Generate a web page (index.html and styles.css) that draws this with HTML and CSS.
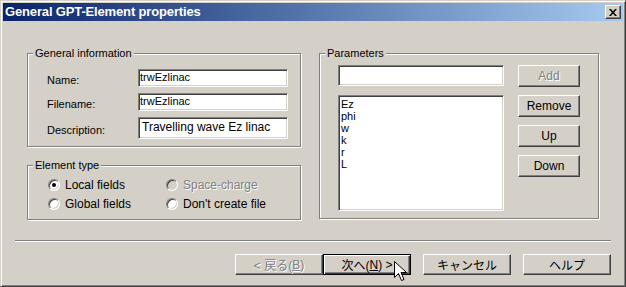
FILE: index.html
```html
<html>
<head>
    <meta http-equiv="content-type" content="text/html;charset=utf-8"/>
    <title>General GPT-Element properties</title>
    <link rel="stylesheet" href="styles.css">
</head>
<body>

<div class="window">
    <div class="titlebar">
        <span class="title">General GPT-Element properties</span>
        <span class="close">
            <svg width="8" height="7" viewBox="0 0 8 7"><path d="M0 0h2l2 2.5 2-2.5h2l-3 3.5 3 3.5h-2l-2-2.5-2 2.5h-2l3-3.5z" fill="#000"/></svg>
        </span>
    </div>

    <div class="main">
        <div class="leftCol">
            <div class="group info">
                <div class="legend">General information</div>
                <div class="fields">
                    <span class="lbl">Name:</span><div class="edit">trwEzlinac</div>
                    <span class="lbl">Filename:</span><div class="edit">trwEzlinac</div>
                    <span class="lbl">Description:</span><div class="edit big">Travelling wave Ez linac</div>
                </div>
            </div>
            <div class="group type">
                <div class="legend">Element type</div>
                <div class="radios">
                    <div class="radio"><span class="dot on"></span>Local fields</div>
                    <div class="radio off"><span class="dot"></span>Space-charge</div>
                    <div class="radio"><span class="dot"></span>Global fields</div>
                    <div class="radio"><span class="dot"></span>Don't create file</div>
                </div>
            </div>
        </div>

        <div class="group params">
            <div class="legend">Parameters</div>
            <div class="paramBody">
                <div class="paramLeft">
                    <div class="edit wide"></div>
                    <div class="list">
                        <div>Ez</div>
                        <div>phi</div>
                        <div>w</div>
                        <div>k</div>
                        <div>r</div>
                        <div>L</div>
                    </div>
                </div>
                <div class="paramBtns">
                    <a class="btn small off">Add</a>
                    <a class="btn small">Remove</a>
                    <a class="btn small">Up</a>
                    <a class="btn small">Down</a>
                </div>
            </div>
        </div>
    </div>

    <div class="separator"></div>

    <div class="footer">
        <a class="btn off">&lt; 戻る(<u>B</u>)</a>
        <a class="btn default">次へ(<u>N</u>) &gt;</a>
        <a class="btn gap">キャンセル</a>
        <a class="btn gap">ヘルプ</a>
    </div>

    <!-- mouse pointer -->
    <svg class="cursor" width="13" height="21" viewBox="0 0 13 21">
        <path d="M0.5 0.5v16l4-4 3 7 2.5-1-3-7h5.5z" fill="#fff" stroke="#000" stroke-width="1"/>
    </svg>
</div>

</body>
</html>
```

FILE: styles.css
```css
@charset "utf-8";

html,body { margin:0; padding:0; background:#d4d0c8;}
body { font-family:"Liberation Sans", "Noto Sans CJK JP", sans-serif; font-size:11px; color:#000;}
a { text-decoration:none; color:#000;}

.window {
    position:relative;
    width:626px;
    height:287px;
    box-sizing:border-box;
    padding:2px;
    background:#d4d0c8;
    border:1px solid;
    border-color:#d4d0c8 #404040 #404040 #d4d0c8;
    box-shadow:inset 1px 1px #fff, inset -1px -1px #808080;}

.titlebar {
    height:18px;
    display:flex;
    align-items:center;
    justify-content:space-between;
    padding:0 2px 0 2px;
    background:linear-gradient(to right, #0a246a, #a6caf0);}
.title { color:#fff; font-weight:bold; font-size:13px; line-height:18px; letter-spacing:-0.15px;}
.close {
    width:16px; height:14px;
    box-sizing:border-box;
    display:flex; align-items:center; justify-content:center;
    background:#d4d0c8;
    border:1px solid;
    border-color:#fff #404040 #404040 #fff;
    box-shadow:inset -1px -1px #808080;}

/* main area */
.main { display:flex; gap:18px; padding:32px 0 0 24px;}
.leftCol { width:274px; display:flex; flex-direction:column; gap:18px;}

.group {
    box-sizing:border-box;
    border:1px solid #808080;
    box-shadow:1px 1px 0 #fff, inset 1px 1px 0 #fff;}
.legend {
    display:table;
    margin:-7px 0 -6px 5px;
    padding:0 2px;
    line-height:13px;
    background:#d4d0c8;}

.info { height:94px;}
.fields {
    display:grid;
    grid-template-columns:91px 150px;
    grid-template-rows:18px 18px 22px;
    row-gap:6px;
    align-items:center;
    padding:15px 0 0 19px;}
.fields .lbl { padding-top:3px;}

.edit {
    box-sizing:border-box;
    height:100%;
    background:#fff;
    padding:0 1px;
    line-height:14px;
    border:1px solid;
    border-color:#808080 #fff #fff #808080;
    box-shadow:inset 1px 1px #404040, inset -1px -1px #d4d0c8;}
.edit.big { font-size:12px; line-height:19px; padding-left:3px;}
.edit.wide { width:166px; height:21px;}

.type { height:55px;}
.radios {
    display:grid;
    grid-template-columns:118px auto;
    grid-auto-rows:19px;
    padding:9px 0 0 20px;}
.radio { display:flex; align-items:center; gap:5px; font-size:12px;}
.radio.off { color:#808080; text-shadow:1px 1px #fff;}
.dot {
    position:relative;
    width:12px; height:12px;
    box-sizing:border-box;
    border-radius:50%;
    background:#fff;
    border:1px solid;
    border-color:#808080 #fff #fff #808080;
    box-shadow:inset 1px 1px #404040, inset -1px -1px #d4d0c8;}
.radio.off .dot { background:#d4d0c8;}
.dot.on:after {
    content:"";
    position:absolute;
    left:3px; top:3px;
    width:4px; height:4px;
    border-radius:50%;
    background:#000;}

.params { width:280px; height:166px;}
.paramBody { display:flex; gap:14px; padding:11px 0 0 18px;}
.paramLeft { display:flex; flex-direction:column; gap:9px;}
.list {
    box-sizing:border-box;
    width:166px; height:116px;
    background:#fff;
    padding:2px 2px;
    font-size:11px;
    line-height:12px;
    border:1px solid;
    border-color:#808080 #fff #fff #808080;
    box-shadow:inset 1px 1px #404040, inset -1px -1px #d4d0c8;}
.paramBtns { display:flex; flex-direction:column; gap:8px;}

/* buttons */
.btn {
    box-sizing:border-box;
    width:88px; height:21px;
    display:flex; align-items:center; justify-content:center;
    font-size:12px;
    background:#d4d0c8;
    border:1px solid;
    border-color:#fff #404040 #404040 #fff;
    box-shadow:inset -1px -1px #808080, inset 1px 1px #d4d0c8;}
.btn.small { width:62px; height:22px;}
.btn.off { color:#808080; text-shadow:1px 1px #fff;}
.btn.default {
    border-color:#000;
    box-shadow:inset 1px 1px #fff, inset -1px -1px #404040, inset -2px -2px #808080;}
.btn u { text-decoration:underline;}

.separator {
    height:1px;
    margin:20px 12px 0 12px;
    background:#808080;
    border-bottom:1px solid #fff;}

.footer { display:flex; justify-content:flex-end; padding:12px 12px 0 0;}
.footer .gap { margin-left:12px;}

.cursor { position:absolute; left:393px; top:260px;}
```
